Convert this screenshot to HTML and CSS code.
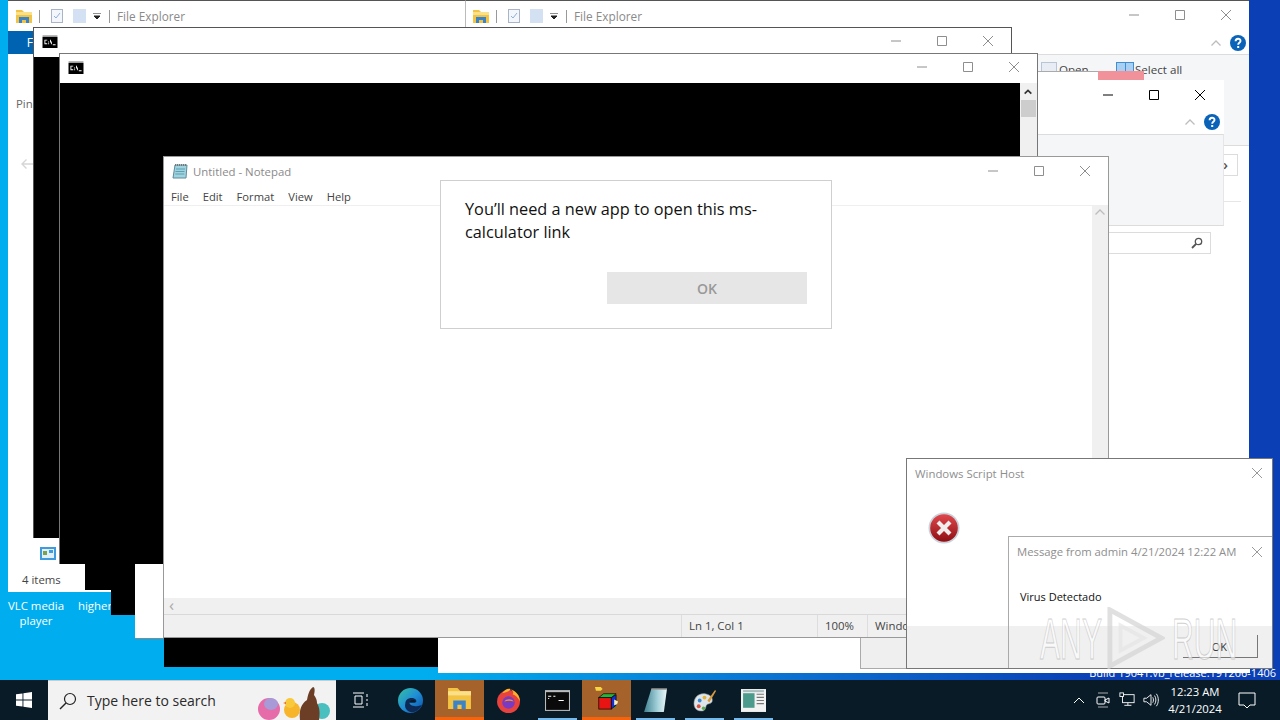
FILE: index.html
```html
<!DOCTYPE html>
<html lang="en">
<head>
<meta charset="UTF-8" />
<meta name="viewport" content="width=device-width, initial-scale=1" />
<title>Desktop</title>
<link rel="stylesheet" href="styles.css">
</head>
<body>

<svg class="defs" width="0" height="0">
  <symbol id="i-min" viewBox="0 0 12 12"><path d="M1 6h10" stroke="currentColor" fill="none"/></symbol>
  <symbol id="i-max" viewBox="0 0 12 12"><path d="M1.5 1.5h9v9h-9z" stroke="currentColor" fill="none"/></symbol>
  <symbol id="i-close" viewBox="0 0 12 12"><path d="M1 1l10 10M11 1L1 11" stroke="currentColor" fill="none"/></symbol>
  <symbol id="i-help" viewBox="0 0 16 16"><circle cx="8" cy="8" r="8" fill="#0a63b8"/><path d="M5.6 6.2c0-3.2 4.9-3.2 4.9-.3 0 1.900-2.300 1.900-2.300 3.800" stroke="#fff" stroke-width="1.900" fill="none"/><rect x="7.200" y="11" width="2" height="2" fill="#fff"/></symbol>
  <symbol id="i-chev" viewBox="0 0 12 8"><path d="M1.500 6.500L6 2l4.500 4.500" stroke="currentColor" stroke-width="1.300" fill="none"/></symbol>
  <symbol id="i-cmd" viewBox="0 0 16 14"><rect width="16" height="14" fill="#b9b9b9"/><rect y="2" width="16" height="12" fill="#000"/><path d="M2 5h3v1H3v3h2v1H2zM6 7h1v1H6zM6 9h1v1H6zM8 5h1v2h1v1H8zM9 8h1v2H9zM11 10h3v1h-3z" fill="#fff"/></symbol>
  <symbol id="i-folder" viewBox="0 0 16 14"><path d="M0 1h6l2 2h8v11H0z" fill="#f3c344"/><rect y="3" width="16" height="3" fill="#fbe08a"/><path d="M3 14V8h10v6h-3v-3H6v3z" fill="#3b83c9"/></symbol>
  <symbol id="i-check" viewBox="0 0 12 14"><rect x=".5" y=".5" width="11" height="13" fill="#f3f6fb" stroke="#a9b4c8"/><path d="M3 7l2 2 4-5" stroke="#8fb0d8" fill="none"/></symbol>
  <symbol id="i-page" viewBox="0 0 13 14"><rect width="13" height="14" fill="#d3e1f2"/></symbol>
  <symbol id="i-caret" viewBox="0 0 8 7"><path d="M0 0h8M1 3h6l-3 3z" stroke="#222" fill="#222"/></symbol>
  <symbol id="i-notepad" viewBox="0 0 16 16"><path d="M3 2h12l-1 13H1z" fill="#9fd3e0" stroke="#5f8a98"/><path d="M4 6h9M3.500 8.500h9M3.300 11h9" stroke="#5f9fb2"/><path d="M3 2h12" stroke="#777" stroke-dasharray="1 1" stroke-width="2"/></symbol>
</svg>

<main class="desktop">
  <div class="build-text">Build 19041.vb_release.191206-1406</div>

  <div class="desk-label desk-vlc">VLC media player</div>
  <div class="desk-label desk-higher">higher</div>

  <!-- back explorer windows -->
  <section class="win explorer-a">
    <div class="qat">
      <svg class="ico16"><use href="#i-folder"/></svg><span class="qat-sep"></span>
      <svg class="ico12"><use href="#i-check"/></svg>
      <svg class="ico12 gap-page"><use href="#i-page"/></svg>
      <svg class="ico8"><use href="#i-caret"/></svg><span class="qat-sep"></span>
      <span class="qat-title">File Explorer</span>
    </div>
    <div class="tab-file">F</div>
    <div class="pin-text">Pin</div>
    <svg class="back-arrow" viewBox="0 0 14 12"><path d="M13 6H2M6.500 1.500L2 6l4.500 4.500" stroke="#d6d6d6" stroke-width="1.400" fill="none"/></svg>
    <svg class="tile" viewBox="0 0 16 13"><rect width="16" height="13" fill="#3f9bdc"/><rect x="2" y="2" width="12" height="9" fill="#dff0fb"/><rect x="3" y="4" width="4" height="4" fill="#7aa24a"/><rect x="9" y="3" width="4" height="3" fill="#3f9bdc"/></svg>
    <div class="status-items">4 items</div>
  </section>

  <section class="win explorer-b">
    <div class="qat">
      <svg class="ico16"><use href="#i-folder"/></svg><span class="qat-sep"></span>
      <svg class="ico12"><use href="#i-check"/></svg>
      <svg class="ico12 gap-page"><use href="#i-page"/></svg>
      <svg class="ico8"><use href="#i-caret"/></svg><span class="qat-sep"></span>
      <span class="qat-title">File Explorer</span>
      <div class="controls dim">
        <span class="ctl"><svg><use href="#i-min"/></svg></span>
        <span class="ctl"><svg><use href="#i-max"/></svg></span>
        <span class="ctl"><svg><use href="#i-close"/></svg></span>
      </div>
    </div>
    <div class="help-row">
      <svg class="chev"><use href="#i-chev"/></svg>
      <svg class="help"><use href="#i-help"/></svg>
    </div>
    <div class="ribbon">
      <span class="rib-item rib-open">Open</span>
      <span class="rib-item rib-select">Select all</span>
    </div>
    <div class="nav-btn">›</div>
    <div class="nav-line"></div>
  </section>

  <section class="win explorer-c">
    <div class="hover-strip"><span class="strip-white"></span><span class="strip-pink"></span></div>
    <div class="c-title controls">
      <span class="ctl"><svg><use href="#i-min"/></svg></span>
      <span class="ctl"><svg><use href="#i-max"/></svg></span>
      <span class="ctl"><svg><use href="#i-close"/></svg></span>
    </div>
    <div class="help-row help-row-c">
      <svg class="chev"><use href="#i-chev"/></svg>
      <svg class="help"><use href="#i-help"/></svg>
    </div>
    <div class="ribbon ribbon-c"></div>
    <div class="search-box">
      <svg class="search-mini" viewBox="0 0 12 12"><circle cx="7.500" cy="4.500" r="3.200" fill="none" stroke="#555" stroke-width="1.300"/><path d="M5 7l-4 4" stroke="#555" stroke-width="1.800"/></svg>
    </div>
  </section>

  <!-- leftovers of the cascade -->
  <div class="ghost ghost-white-wide"></div>
  <div class="ghost ghost-gray"></div>
  <div class="ghost ghost-black-a"></div>
  <div class="ghost ghost-black-b"></div>
  <div class="ghost ghost-white-tall"></div>
  <div class="ghost ghost-black-c"></div>

  <section class="win cmd cmd-a">
    <div class="titlebar">
      <svg class="cmd-ico"><use href="#i-cmd"/></svg>
      <div class="controls dim">
        <span class="ctl"><svg><use href="#i-min"/></svg></span>
        <span class="ctl"><svg><use href="#i-max"/></svg></span>
        <span class="ctl"><svg><use href="#i-close"/></svg></span>
      </div>
    </div>
    <div class="console"></div>
  </section>

  <section class="win cmd cmd-b">
    <div class="titlebar">
      <svg class="cmd-ico"><use href="#i-cmd"/></svg>
      <div class="controls dim">
        <span class="ctl"><svg><use href="#i-min"/></svg></span>
        <span class="ctl"><svg><use href="#i-max"/></svg></span>
        <span class="ctl"><svg><use href="#i-close"/></svg></span>
      </div>
    </div>
    <div class="console-row">
      <div class="console"></div>
      <div class="cmd-scroll">
        <svg class="cmd-up" viewBox="0 0 12 8"><path d="M2 6l4-4 4 4" stroke="#333" stroke-width="2" fill="none"/></svg>
        <div class="cmd-thumb"></div>
      </div>
    </div>
  </section>

  <section class="win notepad">
    <div class="titlebar np-title">
      <svg class="np-ico"><use href="#i-notepad"/></svg>
      <span class="np-name">Untitled - Notepad</span>
      <div class="controls dim">
        <span class="ctl"><svg><use href="#i-min"/></svg></span>
        <span class="ctl"><svg><use href="#i-max"/></svg></span>
        <span class="ctl"><svg><use href="#i-close"/></svg></span>
      </div>
    </div>
    <nav class="menu">
      <span>File</span><span>Edit</span><span>Format</span><span>View</span><span>Help</span>
    </nav>
    <div class="np-body">
      <div class="np-edit"></div>
      <div class="np-vscroll"><svg class="chev"><use href="#i-chev"/></svg></div>
    </div>
    <div class="np-hscroll">‹</div>
    <footer class="np-status">
      <span class="st-pos">Ln 1, Col 1</span>
      <span class="st-zoom">100%</span>
      <span class="st-enc">Windows (CRLF)</span>
    </footer>
  </section>

  <div class="app-dialog">
    <p class="app-msg">You’ll need a new app to open this ms-calculator link</p>
    <div class="app-actions"><button class="app-ok">OK</button></div>
  </div>

  <section class="win wsh">
    <div class="wsh-title">
      <span>Windows Script Host</span>
      <svg class="wsh-x"><use href="#i-close"/></svg>
    </div>
    <svg class="err-ico" viewBox="0 0 32 32">
      <defs><linearGradient id="err" x1="0" y1="0" x2="0" y2="1"><stop offset="0" stop-color="#e0474c"/><stop offset="1" stop-color="#8e0f14"/></linearGradient></defs>
      <circle cx="16" cy="16" r="15.500" fill="#c9d3dc"/>
      <circle cx="16" cy="16" r="13.800" fill="url(#err)"/>
      <path d="M10 10l12 12M22 10L10 22" stroke="#f2eeee" stroke-width="4.200"/>
    </svg>
    <div class="wsh-foot"></div>
  </section>

  <section class="win msg">
    <div class="wsh-title msg-title">
      <span>Message from admin 4/21/2024 12:22 AM</span>
      <svg class="wsh-x"><use href="#i-close"/></svg>
    </div>
    <div class="msg-text">Virus Detectado</div>
    <div class="wsh-foot msg-foot"><button class="msg-ok">OK</button></div>
  </section>

  <div class="watermark">
    <span class="wm-word">ANY</span>
    <svg class="wm-play" viewBox="0 0 60 62"><path d="M3 2l53 29L3 60z" fill="none" stroke="#d4d4d4" stroke-width="5"/><path d="M14 18l24 13-24 13z" fill="none" stroke="#e6e6e6" stroke-width="4"/></svg>
    <span class="wm-word">RUN</span>
  </div>
</main>

<footer class="taskbar">
  <div class="start">
    <svg viewBox="0 0 16 16"><path d="M0 2.300l6.500-.9v6.200H0zM7.400 1.300L16 0v7.600H7.400zM0 8.400h6.500v6.200L0 13.700zM7.400 8.400H16V16l-8.600-1.300z" fill="#fff"/></svg>
  </div>
  <div class="search">
    <svg class="search-glass" viewBox="0 0 18 18"><circle cx="11" cy="7" r="5.500" fill="none" stroke="#222" stroke-width="1.200"/><path d="M7 11l-6 6" stroke="#222" stroke-width="1.400"/></svg>
    <span>Type here to search</span>
    <svg class="easter" viewBox="0 0 78 38">
      <ellipse cx="11" cy="27" rx="11" ry="11" fill="#e56ca8"/><ellipse cx="13" cy="22" rx="7" ry="6" fill="#a79ad6"/>
      <ellipse cx="34" cy="28" rx="8" ry="8" fill="#f7b52c"/><circle cx="32" cy="21" r="5" fill="#f9c93c"/><path d="M25 21l3-1v2z" fill="#e9641b"/>
      <ellipse cx="64" cy="29" rx="8" ry="8" fill="#49bfc0"/>
      <path d="M42 38c-1-10 1-16 7-20 1-5 2-10 6-13 2 0 2 4 1 8 2 3 3 5 3 8 3 5 3 11 2 17z" fill="#6d3e26"/>
    </svg>
  </div>
  <div class="task-icons">
    <span class="task task-view"><svg viewBox="0 0 16 16"><path d="M1 1h11M1 15h11M3 4h7v8H3zM15 2v3M15 7v2M15 11v3" stroke="#fff" fill="none"/></svg></span>
    <span class="task"><svg viewBox="0 0 24 24"><defs><linearGradient id="edge" x1="0" y1="0" x2="1" y2="1"><stop offset="0" stop-color="#35c1a0"/><stop offset=".5" stop-color="#1f8fd6"/><stop offset="1" stop-color="#0c4ea8"/></linearGradient></defs><circle cx="12" cy="12" r="12" fill="url(#edge)"/><path d="M7 15c0-5 6-7 10-4 1 1 1 3-1 3h-5c0 3 5 5 12 2-2 5-7 8-11 7-4-1-6-5-5-8z" fill="#0c2a55"/><path d="M11 14c1-3 5-3 6-1l-1 1z" fill="#0a1c2a"/></svg></span>
    <span class="task on"><svg viewBox="0 0 24 22"><path d="M1 1h9l3 3h10v17H1z" fill="#f3c344"/><rect x="1" y="4" width="22" height="4" fill="#fbe08a"/><path d="M6 21v-8h12v8h-4v-4h-4v4z" fill="#3b83c9"/></svg></span>
    <span class="task"><svg viewBox="0 0 24 24"><circle cx="12" cy="13" r="11" fill="#e8423f"/><path d="M6 5c2-3 5-5 8-4 5 2 9 6 9 12-2-4-4-6-7-7 1-1 1-3-2-5-1 2-3 3-8 4z" fill="#fbb129"/><circle cx="12" cy="14" r="6" fill="#7a3bc0"/><path d="M8 13c2-3 7-3 9 0-3-1-6-1-9 0z" fill="#f9902a"/></svg></span>
    <span class="task run"><svg viewBox="0 0 24 20"><rect width="24" height="20" fill="#bbb"/><rect x="1" y="2" width="22" height="17" fill="#0a0a0a"/><path d="M3 6h3M8 6h2M3 8h1M13 10h5" stroke="#fff"/></svg></span>
    <span class="task on"><svg viewBox="0 0 26 26"><path d="M6 11l8-3 8 3v12H6z" fill="#1fa12b"/><rect x="5" y="12" width="13" height="12" fill="#e81414" stroke="#000" stroke-width=".7"/><path d="M18 12l5-3v11l-5 4z" fill="#1432d0" stroke="#000" stroke-width=".7"/><path d="M5 12l5-4h13l-5 4z" fill="#28b43a" stroke="#000" stroke-width=".7"/><path d="M1 1h6l2 2-2 2H2z" fill="#f5d742"/><path d="M21 14l4 2-1 3-3 1z" fill="#f5f0c0"/></svg></span>
    <span class="task run"><svg viewBox="0 0 24 24"><defs><linearGradient id="pad" x1="0" y1="0" x2="1" y2="0"><stop offset="0" stop-color="#3f8391"/><stop offset=".6" stop-color="#a6d2da"/><stop offset="1" stop-color="#eef7f9"/></linearGradient></defs><path d="M8 1h15l-3 22H1z" fill="url(#pad)"/><path d="M8 1h15" stroke="#999" stroke-width="1.500"/></svg></span>
    <span class="task run"><svg viewBox="0 0 26 26"><path d="M2 16c0-7 6-11 12-10 5 1 8 4 7 8-1 3-5 2-6 4-1 3-1 6-5 6-5 0-8-3-8-8z" fill="#dfe6ea" stroke="#6b7b85" stroke-width=".6"/><circle cx="8" cy="13" r="2" fill="#3a89d6"/><circle cx="13" cy="10" r="2" fill="#e7b23a"/><circle cx="7" cy="19" r="2" fill="#d9503f"/><circle cx="12" cy="21" r="1.800" fill="#5cab4a"/><path d="M16 13L24 2l1 1-7 12z" fill="#d99a3a"/></svg></span>
    <span class="task run"><svg viewBox="0 0 24 22"><rect width="24" height="22" fill="#f2f2f2"/><rect x="2" y="4" width="11" height="14" fill="#4c9a8c"/><path d="M15 5h7M15 8h7M15 11h7M15 14h7" stroke="#777"/><rect x="2" y="1" width="20" height="2" fill="#a9bcbc"/></svg></span>
  </div>
  <div class="tray">
    <svg class="tray-chev" viewBox="0 0 12 8"><path d="M1 7l5-5 5 5" stroke="#fff" fill="none"/></svg>
    <svg class="tray-ico" viewBox="0 0 16 18"><path d="M3 2h10M3 16h10" stroke="#aaa"/><rect x="2" y="6" width="8" height="7" rx="1" stroke="#fff" fill="none"/><path d="M10 9l4-2v5l-4-2z" stroke="#fff" fill="none"/></svg>
    <svg class="tray-ico" viewBox="0 0 18 18"><rect x="4" y="3" width="13" height="9" stroke="#fff" fill="none"/><rect x="1" y="1" width="4" height="4" fill="#0a1c2a" stroke="#fff"/><path d="M10 12v3M6 15h8" stroke="#fff"/></svg>
    <svg class="tray-ico" viewBox="0 0 18 18"><path d="M1 7h3l5-4v12l-5-4H1z" stroke="#fff" fill="none"/><path d="M11 6c1 2 1 4 0 6M13 4c2 3 2 7 0 10M15 2c3 4 3 10 0 14" stroke="#fff" fill="none"/></svg>
    <div class="clock"><div>12:23 AM</div><div>4/21/2024</div></div>
    <svg class="notif" viewBox="0 0 18 18"><path d="M1 2h16v12h-5l-3 3-3-3H1z" stroke="#fff" fill="none"/></svg>
  </div>
</footer>

</body>
</html>
```

FILE: styles.css
```css
* {
  box-sizing: border-box;
}

html, body {
  margin: 0;
  width: 1280px;
  height: 720px;
  overflow: hidden;
  font-family: "Open Sans", "Noto Sans", sans-serif;
}

.defs {
  position: absolute;
}

.desktop {
  position: relative;
  height: 680px;
  overflow: hidden;
  background: linear-gradient(90deg, #00aeef 0, #00aeef 420px, #0a6fd0 800px, #0a3fb5 1100px, #0a3fb5 100%);
}

.win {
  position: absolute;
  background: #fff;
}

/* desktop text */
.build-text {
  position: absolute;
  right: 4px;
  top: 665px;
  color: #fff;
  font-size: 11px;
}

.desk-label {
  position: absolute;
  color: #fff;
  font-size: 11.4px;
  line-height: 15px;
  text-align: center;
}

.desk-vlc {
  left: 3px;
  top: 598px;
  width: 66px;
}

.desk-higher {
  left: 78px;
  top: 598px;
}

/* explorer */
.explorer-a {
  left: 8px;
  top: 0;
  width: 458px;
  height: 592px;
  border-top: 1px solid #555;
  border-right: 1px solid #aaa;
}

.explorer-b {
  left: 465px;
  top: 0;
  width: 784px;
  height: 673px;
  border-top: 1px solid #555;
  border-left: 1px solid #bbb;
}

.explorer-b .qat {
  padding-left: 7px;
}

.qat {
  display: flex;
  align-items: center;
  height: 30px;
  padding-left: 8px;
  font-size: 11.8px;
  color: #8a8a8a;
}

.ico16 {
  width: 16px;
  height: 14px;
}

.ico12 {
  width: 12px;
  height: 14px;
  margin-left: 11px;
}

.gap-page {
  width: 13px;
  margin-left: 10px;
}

.ico8 {
  width: 8px;
  height: 7px;
  margin-left: 7px;
}

.qat-sep {
  width: 1px;
  height: 13px;
  margin-left: 7px;
  background: #999;
}

.ico8 + .qat-sep {
  margin-left: 8px;
  margin-right: 7px;
}

.qat .controls {
  margin-left: auto;
  align-self: flex-start;
}

.qat .ctl {
  height: 28px;
}

.controls {
  display: flex;
}

.controls.dim {
  color: #8e8e8e;
}

.ctl {
  display: flex;
  align-items: center;
  justify-content: center;
  width: 46px;
  height: 30px;
}

.ctl svg {
  width: 12px;
  height: 12px;
}

.tab-file {
  width: 25px;
  height: 23px;
  background: #0063b1;
  color: #fff;
  font-size: 12px;
  line-height: 23px;
  text-align: right;
}

.pin-text {
  margin: 42px 0 0 8px;
  font-size: 11.4px;
  color: #666;
}

.back-arrow {
  display: block;
  width: 14px;
  height: 12px;
  margin: 47px 0 0 12px;
}

.tile {
  display: block;
  width: 16px;
  height: 13px;
  margin: 377px 0 0 32px;
}

.status-items {
  margin: 12px 0 0 14px;
  font-size: 11.4px;
  color: #444;
}

.help-row {
  display: flex;
  align-items: center;
  justify-content: flex-end;
  height: 23px;
  padding-right: 3px;
}

.chev {
  width: 12px;
  height: 8px;
  color: #bdbdbd;
}

.help {
  width: 16px;
  height: 16px;
  margin-left: 8px;
}

.ribbon {
  position: relative;
  height: 92px;
  background: #f5f6f8;
  border-top: 1px solid #dcdcdc;
  border-bottom: 1px solid #dcdcdc;
  overflow: hidden;
  font-size: 11.6px;
  color: #444;
}

.rib-item {
  position: absolute;
  top: 7px;
}

.rib-open {
  left: 593px;
}

.rib-open::before {
  content: "";
  position: absolute;
  left: -18px;
  top: 0;
  width: 14px;
  height: 12px;
  background: #e8edf5;
  border: 1px solid #b9c4d6;
}

.rib-select {
  left: 669px;
}

.rib-select::before {
  content: "";
  position: absolute;
  left: -19px;
  top: 0;
  width: 8px;
  height: 10px;
  background: #a9d0f2;
  border: 1px solid #3f8fd2;
  box-shadow: 8px 0 0 -1px #a9d0f2, 8px 0 0 0 #3f8fd2;
}

.nav-btn {
  width: 20px;
  height: 22px;
  margin: 8px 0 0 752px;
  border: 1px solid #dcdcdc;
  font-size: 15px;
  font-weight: 600;
  line-height: 18px;
  color: #555;
  padding-left: 4px;
}

.nav-line {
  height: 1px;
  margin: 25px 8px 0 644px;
  background: #e6e6e6;
}

.explorer-c {
  left: 1037px;
  top: 71px;
  width: 187px;
  height: 186px;
  background: none;
}

.hover-strip {
  display: flex;
  height: 9px;
}

.strip-white {
  width: 61px;
  background: #fff;
  border-top: 1px solid #aaa;
}

.strip-pink {
  width: 46px;
  background: #f1919a;
}

.c-title {
  justify-content: flex-end;
  padding-right: 1px;
  background: #fff;
  color: #000;
}

.help-row-c {
  height: 24px;
  background: #fff;
  padding-right: 4px;
}

.ribbon-c {
  height: 92px;
  border-right: 1px solid #e6e6e6;
}

.search-box {
  display: flex;
  align-items: center;
  justify-content: flex-end;
  width: 174px;
  height: 22px;
  margin-top: 6px;
  padding-right: 7px;
  border: 1px solid #dcdcdc;
}

.search-mini {
  width: 12px;
  height: 12px;
}

/* window bits poking out from under the stack */
.ghost {
  position: absolute;
}

.ghost-white-wide {
  left: 438px;
  top: 600px;
  width: 812px;
  height: 73px;
  background: #fff;
}

.ghost-gray {
  left: 860px;
  top: 620px;
  width: 60px;
  height: 49px;
  background: #efefef;
  border-left: 1px solid #aaa;
  border-bottom: 1px solid #aaa;
}

.ghost-black-a {
  left: 85px;
  top: 540px;
  width: 30px;
  height: 50px;
  background: #000;
}

.ghost-black-b {
  left: 111px;
  top: 540px;
  width: 30px;
  height: 75px;
  background: #000;
}

.ghost-white-tall {
  left: 135px;
  top: 540px;
  width: 40px;
  height: 99px;
  background: #fff;
  border-bottom: 1px solid #888;
}

.ghost-black-c {
  left: 164px;
  top: 620px;
  width: 274px;
  height: 47px;
  background: #000;
}

/* console windows */
.cmd {
  display: flex;
  flex-direction: column;
}

.cmd-a {
  left: 33px;
  top: 27px;
  width: 979px;
  height: 511px;
  border: 1px solid #555;
  border-bottom: 0;
}

.cmd-b {
  left: 59px;
  top: 53px;
  width: 979px;
  height: 511px;
  border: 1px solid #777;
  border-bottom: 0;
}

.titlebar {
  display: flex;
  align-items: center;
  justify-content: space-between;
  height: 29px;
  flex: none;
  padding-left: 8px;
}

.cmd .titlebar {
  align-items: flex-start;
}

.cmd .ctl {
  height: 26px;
}

.cmd-ico {
  width: 16px;
  height: 13px;
  margin-top: 7px;
}

.console {
  flex: 1;
  background: #000;
}

.console-row {
  display: flex;
  flex: 1;
}

.cmd-scroll {
  width: 17px;
  background: #f0f0f0;
}

.cmd-up {
  display: block;
  width: 10px;
  height: 8px;
  margin: 5px 0 0 3px;
}

.cmd-thumb {
  height: 17px;
  margin: 4px 1px 0;
  background: #cdcdcd;
}

/* notepad */
.notepad {
  display: flex;
  flex-direction: column;
  left: 163px;
  top: 156px;
  width: 946px;
  height: 482px;
  border: 1px solid #999;
}

.np-title {
  justify-content: flex-start;
  padding-bottom: 1px;
}

.np-ico {
  width: 16px;
  height: 16px;
}

.np-name {
  margin-left: 5px;
  font-size: 11.4px;
  color: #8a8a8a;
}

.np-title .controls {
  margin-left: auto;
  align-self: flex-start;
}

.np-title .ctl {
  height: 28px;
}

.menu {
  display: flex;
  gap: 14px;
  height: 20px;
  padding-left: 7px;
  font-size: 11.2px;
  line-height: 22px;
  color: #444;
  border-bottom: 1px solid #efefef;
}

.np-body {
  display: flex;
  flex: 1;
}

.np-edit {
  flex: 1;
}

.np-vscroll {
  width: 16px;
  padding: 2px 2px 0;
  background: #f0f0f0;
}

.np-vscroll .chev {
  display: block;
}

.np-hscroll {
  height: 16px;
  padding-left: 5px;
  background: #f0f0f0;
  font-size: 17px;
  line-height: 13px;
  color: #aaa;
}

.np-status {
  display: flex;
  height: 23px;
  background: #f0f0f0;
  border-top: 1px solid #d9d9d9;
  font-size: 11.4px;
  line-height: 22px;
  color: #444;
  white-space: nowrap;
}

.st-pos {
  width: 136px;
  margin-left: 517px;
  padding-left: 7px;
  border-left: 1px solid #ddd;
}

.st-zoom {
  width: 50px;
  padding-left: 7px;
  border-left: 1px solid #ddd;
}

.st-enc {
  padding-left: 7px;
  border-left: 1px solid #ddd;
}

/* "you'll need a new app" prompt */
.app-dialog {
  position: absolute;
  left: 440px;
  top: 180px;
  width: 392px;
  height: 149px;
  padding: 17px 24px 0;
  background: #fff;
  border: 1px solid #cfcfcf;
}

.app-msg {
  margin: 0;
  font-size: 16.3px;
  line-height: 23px;
  color: #111;
}

.app-actions {
  display: flex;
  justify-content: flex-end;
  margin-top: 28px;
}

.app-ok {
  width: 200px;
  height: 32px;
  border: none;
  background: #e6e6e6;
  color: #999;
  font: 600 14px "Open Sans", sans-serif;
}

/* script host */
.wsh {
  left: 906px;
  top: 458px;
  width: 367px;
  height: 211px;
  border: 1px solid #777;
}

.wsh-title {
  display: flex;
  align-items: center;
  justify-content: space-between;
  height: 28px;
  padding: 0 9px 0 8px;
  font-size: 11.4px;
  color: #8e8e8e;
}

.wsh-x {
  width: 12px;
  height: 12px;
  color: #999;
}

.err-ico {
  display: block;
  width: 32px;
  height: 32px;
  margin: 25px 0 0 21px;
}

.wsh-foot {
  position: absolute;
  left: 0;
  right: 0;
  bottom: 0;
  height: 42px;
  background: #f0f0f0;
}

.msg {
  left: 1008px;
  top: 536px;
  width: 264px;
  height: 132px;
  border-top: 1px solid #aaa;
  border-left: 1px solid #aaa;
}

.msg-title {
  height: 29px;
  font-size: 11.3px;
}

.msg-text {
  margin: 23px 0 0 11px;
  font-size: 11px;
  color: #111;
}

.msg-foot {
  display: flex;
  justify-content: flex-end;
  padding: 9px 14px 0 0;
}

.msg-ok {
  width: 75px;
  height: 23px;
  background: none;
  border: none;
  border-right: 1px solid #777;
  border-bottom: 1px solid #777;
  font: 11px "Open Sans", sans-serif;
  color: #333;
  text-align: right;
  padding: 0 30px 0 0;
}

/* watermark over the corner */
.watermark {
  position: absolute;
  left: 1040px;
  top: 606px;
  display: flex;
  align-items: center;
  gap: 7px;
  height: 64px;
  font-family: "Liberation Sans", sans-serif;
  font-size: 58px;
  color: rgba(255, 255, 255, .65);
  -webkit-text-stroke: 1px rgba(175, 175, 175, .6);
  pointer-events: none;
}

.wm-word {
  display: block;
  width: 60px;
  transform: scaleX(.52);
  transform-origin: left center;
}

.wm-play {
  width: 58px;
  height: 62px;
  opacity: .7;
}

/* taskbar */
.taskbar {
  display: flex;
  height: 40px;
  background: #0a1b28;
}

.start {
  display: flex;
  align-items: center;
  justify-content: center;
  width: 48px;
}

.start svg {
  width: 16px;
  height: 16px;
}

.search {
  display: flex;
  align-items: center;
  width: 288px;
  padding-left: 11px;
  background: #f2f2f2;
  border-top: 1px solid #ccc;
  font-size: 14px;
  color: #2a2a2a;
}

.search-glass {
  width: 18px;
  height: 18px;
  margin-right: 10px;
}

.easter {
  width: 78px;
  height: 38px;
  margin-left: auto;
}

.task-icons {
  display: flex;
  margin-left: 1px;
}

.task {
  position: relative;
  display: flex;
  align-items: center;
  justify-content: center;
  width: 49px;
  height: 40px;
}

.task svg {
  width: 25px;
  height: 25px;
}

.task-view svg {
  width: 16px;
  height: 16px;
  margin-right: 3px;
}

.task.on {
  background: #a5622b;
  border-bottom: 3px solid #f7630c;
}

.task.run::after {
  content: "";
  position: absolute;
  left: 5px;
  right: 5px;
  bottom: 0;
  height: 2px;
  background: #76b9ed;
}

.tray {
  display: flex;
  align-items: center;
  margin-left: auto;
  color: #fff;
}

.tray-chev {
  width: 12px;
  height: 8px;
  margin-right: 2px;
}

.tray-ico {
  width: 16px;
  height: 18px;
  margin-left: 8px;
}

.clock {
  width: 58px;
  margin-left: 7px;
  font-size: 11.3px;
  line-height: 17px;
  text-align: center;
  white-space: nowrap;
}

.notif {
  width: 18px;
  height: 18px;
  margin: 0 24px 0 14px;
}
```
